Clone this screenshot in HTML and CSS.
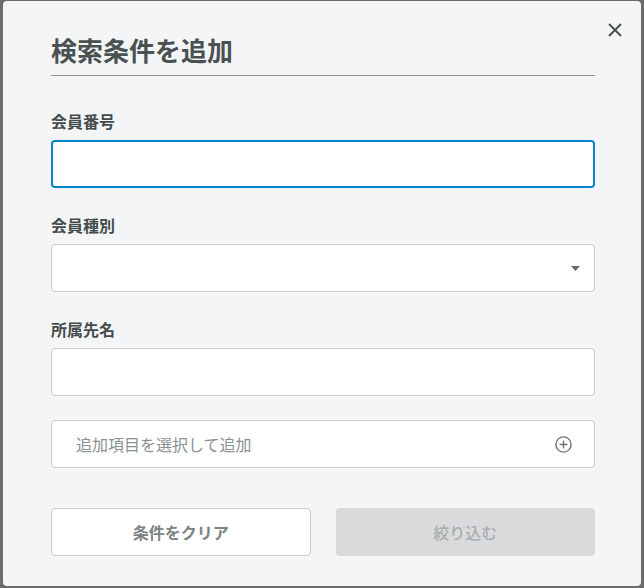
FILE: index.html
```html
<!DOCTYPE html>
<html lang="ja">
<head>
<meta charset="utf-8">
<title>検索条件を追加</title>
<link rel="stylesheet" href="styles.css">
</head>
<body>
<div class="dialog">
  <button class="close" aria-label="閉じる">
    <svg width="14" height="14" viewBox="0 0 14 14"><path d="M1 1L13 13M13 1L1 13" stroke="#4b5151" stroke-width="2" fill="none"/></svg>
  </button>
  <h1 class="title">検索条件を追加</h1>
  <div class="field">
    <label class="label">会員番号</label>
    <div class="input focus"></div>
  </div>
  <div class="field">
    <label class="label">会員種別</label>
    <div class="input select">
      <svg class="caret" width="9" height="5" viewBox="0 0 9 5"><path d="M0 0H9L4.5 5Z" fill="#666b6b"/></svg>
    </div>
  </div>
  <div class="field">
    <label class="label">所属先名</label>
    <div class="input"></div>
  </div>
  <div class="input adder">
    <span class="placeholder">追加項目を選択して追加</span>
    <svg class="plus" width="17" height="17" viewBox="0 0 17 17"><circle cx="8.5" cy="8.5" r="7.6" stroke="#6d7373" stroke-width="1.4" fill="none"/><path d="M8.5 4.5V12.5M4.5 8.5H12.5" stroke="#6d7373" stroke-width="1.4"/></svg>
  </div>
  <div class="actions">
    <button class="btn clear">条件をクリア</button>
    <button class="btn apply" disabled>絞り込む</button>
  </div>
</div>
</body>
</html>
```

FILE: styles.css
```css
html, body {
  margin: 0;
  padding: 0;
  background: #6b6c6c;
  font-family: "Noto Sans CJK JP", "Noto Sans", sans-serif;
}
body {
  padding: 1px 3px 2px 3px;
}
.dialog {
  position: relative;
  box-sizing: border-box;
  width: 638px;
  height: 585px;
  background: #f4f5f7;
  border-radius: 4px;
  padding: 31px 46px 0 48px;
}
.close {
  position: absolute;
  top: 22px;
  right: 19px;
  width: 14px;
  height: 14px;
  padding: 0;
  border: 0;
  background: none;
  display: flex;
}
.title {
  margin: 0;
  font-size: 26px;
  line-height: 36px;
  font-weight: 700;
  color: #4a5151;
  padding-bottom: 7px;
  border-bottom: 1px solid #8d9292;
  margin-bottom: 35px;
}
.field {
  display: flex;
  flex-direction: column;
  margin-bottom: 27px;
}
.label {
  font-size: 16px;
  line-height: 20px;
  font-weight: 700;
  color: #454c4c;
  margin-bottom: 9px;
}
.input {
  box-sizing: border-box;
  height: 48px;
  background: #fff;
  border: 1px solid #c9cccd;
  border-radius: 4px;
  display: flex;
  align-items: center;
}
.input.focus {
  border: 2px solid #0a86c8;
}
.select {
  justify-content: flex-end;
  padding-right: 14px;
}
.adder {
  margin-top: -3px;
  justify-content: space-between;
  padding: 0 22px 0 24px;
}
.placeholder {
  font-size: 16px;
  color: #8a9191;
}
.actions {
  display: grid;
  grid-template-columns: 1fr 1fr;
  gap: 25px;
  margin-top: 40px;
}
.btn {
  height: 48px;
  border-radius: 4px;
  font-family: inherit;
  font-size: 16px;
  font-weight: 700;
}
.clear {
  background: #fff;
  border: 1px solid #c9cccd;
  color: #7c8383;
}
.apply {
  background: #d9dadc;
  border: 0;
  color: #a9adad;
  font-weight: 500;
}
```
